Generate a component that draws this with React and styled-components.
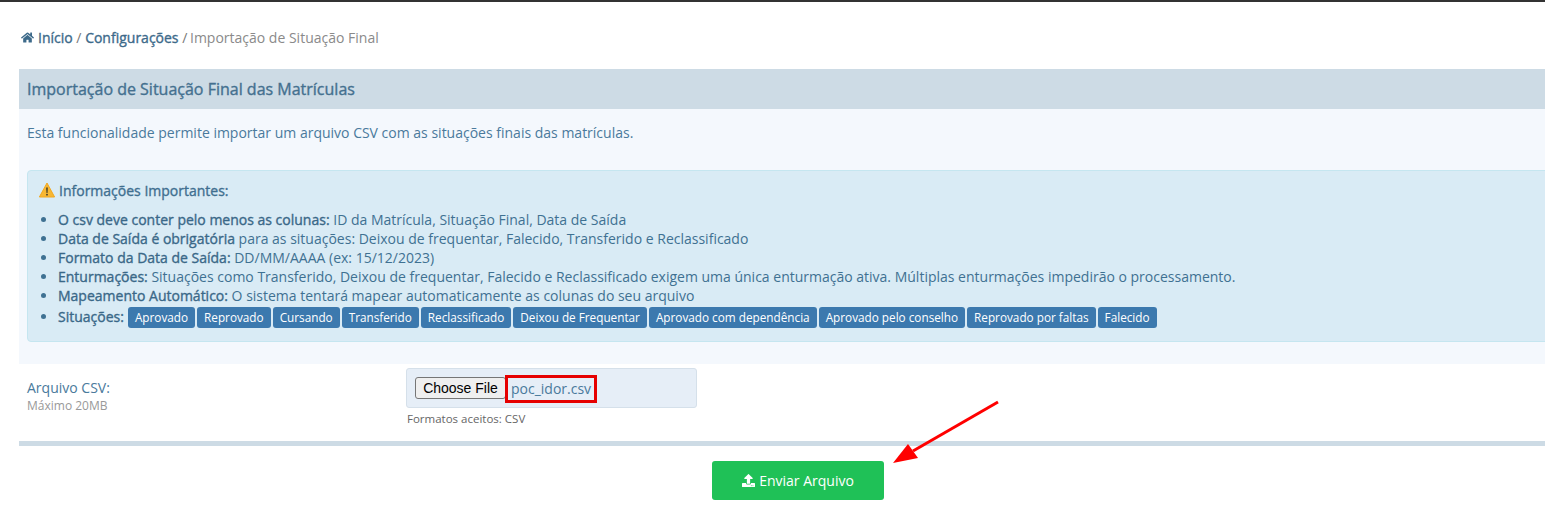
import React from "react";
import styled, { createGlobalStyle } from "styled-components";
import { FaHome, FaUpload } from "react-icons/fa";

const Global = createGlobalStyle`
  html, body { margin: 0; padding: 0; background: #fff; overflow: hidden; }
  body { font-family: "Open Sans", "Liberation Sans", sans-serif; font-size: 14px; color: #4a7a9c; }
`;

const Page = styled.div`
  position: relative;
  width: 1545px;
  height: 529px;
  overflow: hidden;
  border-top: 2px solid #333;
  box-sizing: border-box;
`;
const Content = styled.div`
  width: 1558px;
  padding: 25px 0 0 19px;
`;
const Breadcrumb = styled.nav`
  display: flex;
  align-items: center;
  height: 20px;
  padding-left: 2px;
  font-size: 14px;
  color: #777;
  white-space: pre;
`;
const Crumb = styled.a`
  color: #3d6a8a;
  font-weight: 400;
  -webkit-text-stroke: 0.35px currentColor;
  display: inline-flex;
  align-items: center;
  gap: 4px;
`;
const Current = styled.span`
  color: #8a8a8a;
  margin-left: -1px;
`;
const Panel = styled.section`
  margin-top: 22px;
`;
const PanelHead = styled.h2`
  margin: 0;
  height: 40px;
  line-height: 40px;
  padding-left: 8px;
  background: #cddbe5;
  color: #44708f;
  font-size: 16px;
  font-weight: 400;
  -webkit-text-stroke: 0.35px currentColor;
`;
const PanelBody = styled.div`
  background: #f4f8fd;
  height: 255px;
  padding: 14px 8px 0;
  box-sizing: border-box;
`;
const Intro = styled.p`
  margin: 0;
  line-height: 19px;
  font-size: 14px;
  color: #4a7a9c;
`;
const Alert = styled.div`
  margin-top: 28px;
  height: 172px;
  box-sizing: border-box;
  background: #d9ebf5;
  border: 1px solid #c5e6f0;
  border-radius: 4px;
  padding: 10px 11px 0;
  color: #3f7192;
`;
const AlertTitle = styled.h4`
  margin: 0 0 9px;
  font-size: 14px;
  font-weight: 400;
  -webkit-text-stroke: 0.35px currentColor;
  line-height: 20px;
  color: #3f6f90;
`;
const Emoji = styled.svg`
  width: 16px;
  height: 16px;
  vertical-align: -2px;
  margin-right: 4px;
`;
const List = styled.ul`
  margin: 0;
  padding-left: 19px;
  list-style: disc;
  font-size: 14px;
  line-height: 19px;
`;
const Item = styled.li`
  white-space: nowrap;
  padding-top: ${(p) => (p.$tagged ? "2px" : "0")};
  b { font-weight: 400; -webkit-text-stroke: 0.35px currentColor; color: #3a6888; }
`;
const Tags = styled.span`
  display: inline-flex;
  gap: 2px;
  margin-left: 4px;
  vertical-align: baseline;
`;
const Tag = styled.span`
  display: inline-block;
  background: #3c79ae;
  color: #fff;
  font-size: 11.76px;
  line-height: 21px;
  padding: 0 7px;
  border-radius: 3px;
`;
const FormRow = styled.div`
  display: flex;
  height: 82px;
  box-sizing: border-box;
  border-bottom: 5px solid #cddbe5;
`;
const LabelCol = styled.div`
  width: 387px;
  padding: 14px 0 0 8px;
  box-sizing: border-box;
`;
const Label = styled.div`
  font-size: 14px;
  line-height: 19px;
  color: #4a7a9c;
`;
const Hint = styled.div`
  font-size: 12px;
  line-height: 17px;
  color: #999;
`;
const FieldCol = styled.div`
  padding-top: 4px;
`;
const FileBox = styled.div`
  display: flex;
  align-items: center;
  width: 291px;
  height: 40px;
  box-sizing: border-box;
  background: #e6eef7;
  border: 1px solid #d5e0ea;
  border-radius: 3px;
  padding-left: 8px;
`;
const ChooseButton = styled.button`
  font-family: "Liberation Sans", Arial, sans-serif;
  font-size: 14px;
  height: 22px;
  width: 91px;
  padding: 0;
  background: #efefef;
  color: #000;
  border: 1px solid #767676;
  border-radius: 3px;
`;
const FileName = styled.span`
  position: relative;
  margin-left: 5px;
  color: #4a7a9c;
  font-size: 14px;
`;
const Highlight = styled.span`
  position: absolute;
  left: -6px;
  top: -4px;
  width: 92px;
  height: 28px;
  box-sizing: border-box;
  border: 3px solid #e60000;
`;
const Formats = styled.div`
  margin-top: 2px;
  padding-left: 1px;
  font-size: 11.5px;
  line-height: 17px;
  color: #666;
`;
const Actions = styled.div`
  display: flex;
  justify-content: center;
  padding-top: 15px;
`;
const Submit = styled.button`
  display: inline-flex;
  align-items: center;
  justify-content: center;
  gap: 4px;
  width: 172px;
  height: 39px;
  border: 0;
  border-radius: 3px;
  background: #1fc157;
  color: #fff;
  font-family: inherit;
  font-size: 14px;
`;
const Arrow = styled.svg`
  position: absolute;
  left: 885px;
  top: 392px;
  width: 125px;
  height: 75px;
`;

const situacoes = ["Aprovado","Reprovado","Cursando","Transferido","Reclassificado","Deixou de Frequentar","Aprovado com dependência","Aprovado pelo conselho","Reprovado por faltas","Falecido"];

export default function App() {
  return (
    <Page>
      <Global />
      <Content>
        <Breadcrumb>
          <Crumb><FaHome size={13} />Início</Crumb> / <Crumb>Configurações</Crumb> / <Current>Importação de Situação Final</Current>
        </Breadcrumb>
        <Panel>
          <PanelHead>Importação de Situação Final das Matrículas</PanelHead>
          <PanelBody>
            <Intro>Esta funcionalidade permite importar um arquivo CSV com as situações finais das matrículas.</Intro>
            <Alert>
              <AlertTitle>
                <Emoji viewBox="0 0 16 16">
                  <path d="M8 1 L15.6 15 H0.4 Z" fill="#f7b733" stroke="#f2a71e" strokeLinejoin="round" />
                  <path d="M7.2 5.5h1.6l-.3 5.5h-1z" fill="#3a3a2a" />
                  <circle cx="8" cy="12.7" r="0.9" fill="#3a3a2a" />
                </Emoji>
                Informações Importantes:
              </AlertTitle>
              <List>
                <Item><b>O csv deve conter pelo menos as colunas:</b> ID da Matrícula, Situação Final, Data de Saída</Item>
                <Item><b>Data de Saída é obrigatória</b> para as situações: Deixou de frequentar, Falecido, Transferido e Reclassificado</Item>
                <Item><b>Formato da Data de Saída:</b> DD/MM/AAAA (ex: 15/12/2023)</Item>
                <Item><b>Enturmações:</b> Situações como Transferido, Deixou de frequentar, Falecido e Reclassificado exigem uma única enturmação ativa. Múltiplas enturmações impedirão o processamento.</Item>
                <Item><b>Mapeamento Automático:</b> O sistema tentará mapear automaticamente as colunas do seu arquivo</Item>
                <Item $tagged>
                  <b>Situações:</b>
                  <Tags>{situacoes.map((s) => <Tag key={s}>{s}</Tag>)}</Tags>
                </Item>
              </List>
            </Alert>
          </PanelBody>
        </Panel>
        <FormRow>
          <LabelCol>
            <Label>Arquivo CSV:</Label>
            <Hint>Máximo 20MB</Hint>
          </LabelCol>
          <FieldCol>
            <FileBox>
              <ChooseButton type="button">Choose File</ChooseButton>
              <FileName>poc_idor.csv<Highlight /></FileName>
            </FileBox>
            <Formats>Formatos aceitos: CSV</Formats>
          </FieldCol>
        </FormRow>
        <Actions>
          <Submit type="button"><FaUpload size={13} />Enviar Arquivo</Submit>
        </Actions>
      </Content>
      <Arrow viewBox="0 0 125 75">
        <line x1="113" y1="8" x2="28" y2="57" stroke="#f00" strokeWidth="3" />
        <polygon points="8,69 23,50 33,64" fill="#f00" />
      </Arrow>
    </Page>
  );
}
